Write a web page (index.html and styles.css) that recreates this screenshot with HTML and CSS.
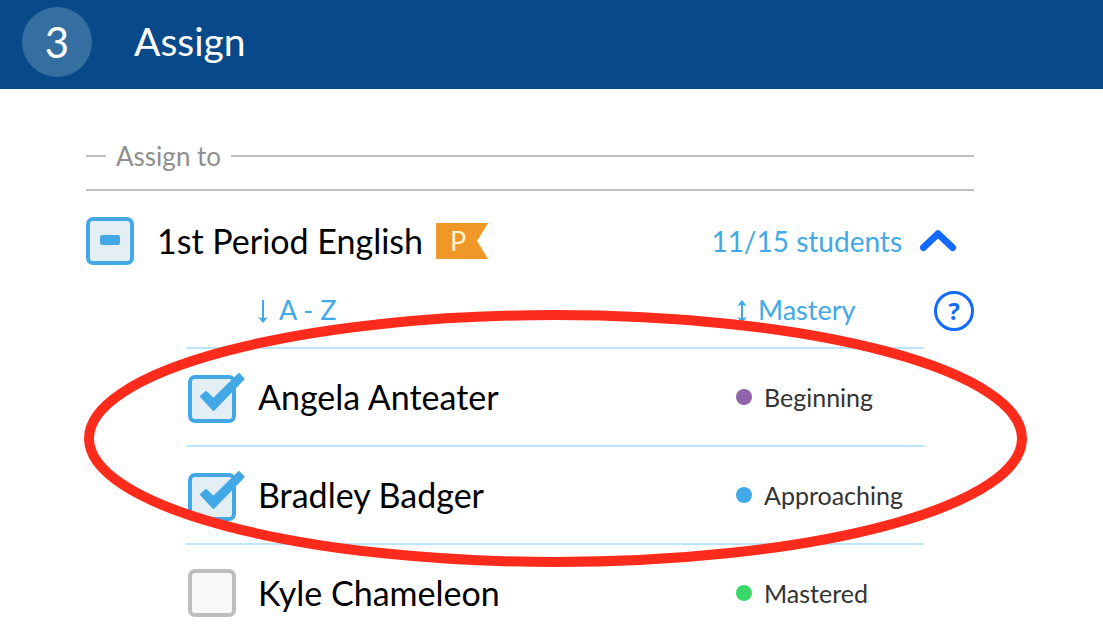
FILE: index.html
```html
<!DOCTYPE html>
<html lang="en">
<head>
<meta charset="utf-8">
<meta name="viewport" content="width=device-width, initial-scale=1">
<title>Assign</title>
<link rel="stylesheet" href="styles.css">
</head>
<body>
<header class="step-header">
  <span class="step-number">3</span>
  <h1 class="step-title">Assign</h1>
</header>
<main class="content">
  <h2 class="section-label">Assign to</h2>
  <section class="class-group">
    <div class="class-row">
      <span class="check">
        <input class="check-input" type="checkbox" id="class-all" checked>
        <svg class="check-art" viewBox="0 0 60 48" aria-hidden="true"><rect class="box-on" x="2" y="2" width="44" height="44" rx="5"/><rect class="mark" x="14" y="18" width="20" height="10" rx="2"/></svg>
      </span>
      <label class="class-name" for="class-all">1st Period English</label>
      <span class="flag"><span class="flag-text">P</span></span>
      <span class="student-count">11/15 students</span>
      <button class="toggle" type="button" aria-label="Collapse class">
        <svg class="toggle-icon" viewBox="0 0 38 24" aria-hidden="true"><path d="M4.500 18.500 19 4.800 33.500 18.500" fill="none" stroke="#146aff" stroke-width="7" stroke-linecap="round" stroke-linejoin="round"/></svg>
      </button>
    </div>
    <div class="roster">
      <table class="students">
        <thead>
          <tr>
            <th class="name-head" colspan="2"><button class="sort" type="button"><svg class="sort-icon" viewBox="0 0 12 24" aria-hidden="true"><path class="stem" d="M6 1V21"/><path class="head" d="M1 18Q6 20 11 18L6 24Z"/></svg>A - Z</button></th>
            <th class="mastery-head"><button class="sort" type="button"><svg class="sort-icon" viewBox="0 0 12 24" aria-hidden="true"><path class="stem" d="M6 4V20"/><path class="head" d="M1 7Q6 5 11 7L6 1ZM1 18Q6 20 11 18L6 24Z"/></svg>Mastery</button></th>
          </tr>
        </thead>
        <tbody>
          <tr>
            <td class="check-cell"><span class="check"><input class="check-input" type="checkbox" id="angela" checked><svg class="check-art" viewBox="0 0 60 48" aria-hidden="true"><rect class="box-on" x="2" y="4" width="44" height="44" rx="5"/><path class="mark tick" d="M13 23.500 18 19 25.500 26 51 1 55.500 6 25.500 37Z"/></svg></span></td>
            <td class="name-cell"><label for="angela">Angela Anteater</label></td>
            <td class="mastery-cell"><span class="mastery beginning">Beginning</span></td>
          </tr>
          <tr>
            <td class="check-cell"><span class="check"><input class="check-input" type="checkbox" id="bradley" checked><svg class="check-art" viewBox="0 0 60 48" aria-hidden="true"><rect class="box-on" x="2" y="4" width="44" height="44" rx="5"/><path class="mark tick" d="M13 23.500 18 19 25.500 26 51 1 55.500 6 25.500 37Z"/></svg></span></td>
            <td class="name-cell"><label for="bradley">Bradley Badger</label></td>
            <td class="mastery-cell"><span class="mastery approaching">Approaching</span></td>
          </tr>
          <tr>
            <td class="check-cell"><span class="check"><input class="check-input" type="checkbox" id="kyle"><svg class="check-art" viewBox="0 0 60 48" aria-hidden="true"><rect class="box-off" x="2" y="2" width="44" height="44" rx="5"/></svg></span></td>
            <td class="name-cell"><label for="kyle">Kyle Chameleon</label></td>
            <td class="mastery-cell"><span class="mastery mastered">Mastered</span></td>
          </tr>
        </tbody>
      </table>
      <button class="help" type="button" aria-label="Help">?</button>
    </div>
    <svg class="highlight" viewBox="0 0 943 257" preserveAspectRatio="none" aria-hidden="true"><ellipse cx="471.500" cy="128.500" rx="466.500" ry="123.500" fill="none" stroke="#fd2b1c" stroke-width="10"/></svg>
  </section>
</main>
</body>
</html>
```

FILE: styles.css
```css
* { box-sizing: border-box; }

body {
  margin: 0;
  background: #fff;
  color: #000;
  font-family: Lato, "Open Sans", sans-serif;
  font-size: 34px;
  line-height: 40px;
}

button {
  padding: 0;
  border: 0;
  background: none;
  font: inherit;
  cursor: pointer;
}

.step-header {
  display: flex;
  align-items: center;
  gap: 42px;
  padding: 7px 22px 12px;
  background: #074989;
  color: #fff;
}

.step-number {
  width: 70px;
  border-radius: 50%;
  background: #356fa2;
  font-size: 42px;
  line-height: 70px;
  text-align: center;
}

.step-title {
  margin: 0;
  padding-bottom: 2px;
  font-size: 39px;
  font-weight: 400;
}

.content { padding: 51px 129px 0 86px; }

.section-label {
  display: flex;
  align-items: center;
  gap: 10px;
  margin: 0 0 17px;
  color: #8e8e8e;
  font-size: 26px;
  font-weight: 400;
  line-height: 32px;
}

.section-label::before,
.section-label::after {
  content: "";
  width: 20px;
  height: 2px;
  background: #bfbfbf;
}

.section-label::after { flex: 1; }

.class-group {
  position: relative;
  border-top: 2px solid #bfbfbf;
}

.class-row {
  display: flex;
  align-items: center;
  padding: 26px 17px 8px 0;
}

.check {
  position: relative;
  display: block;
  flex: none;
  width: 48px;
  height: 48px;
}

.check-input {
  display: block;
  width: 48px;
  height: 48px;
  margin: 0;
  appearance: none;
}

.check-art {
  position: absolute;
  top: 0;
  left: 0;
  width: 60px;
  height: 48px;
  overflow: visible;
  pointer-events: none;
}

.box-on { fill: #e4eef5; stroke: #42a9e6; stroke-width: 4; }
.box-off { fill: #f8f8f8; stroke: #bebebe; stroke-width: 4; }
.mark { fill: #42a9e6; }
.tick { stroke: #42a9e6; stroke-width: 2; stroke-linejoin: round; }

.class-name { margin-left: 23px; }

.flag {
  width: 52px;
  height: 36px;
  margin-left: 13px;
  padding-left: 14px;
  background: #ef9827;
  clip-path: polygon(0 0, 100% 0, 79% 50%, 100% 100%, 0 100%);
  color: #fff3d0;
  font-size: 27px;
  line-height: 36px;
}

.student-count {
  margin-left: auto;
  color: #42a9e6;
  font-size: 28px;
}

.toggle {
  width: 38px;
  height: 24px;
  margin-left: 17px;
}

.toggle-icon {
  display: block;
  width: 38px;
  height: 24px;
}

.roster {
  display: flex;
  gap: 10px;
  padding-left: 100px;
}

.students {
  flex: 1;
  border-collapse: separate;
  border-spacing: 0;
  table-layout: fixed;
}

.students th {
  padding: 17px 0;
  border-bottom: 2px solid #bce5fb;
  color: #42a9e6;
  font-size: 27px;
  font-weight: 400;
  text-align: left;
}

.students .name-head { padding-left: 71px; }
.mastery-head { width: 188px; }

.sort {
  display: flex;
  align-items: center;
  gap: 10px;
  color: inherit;
}

.sort-icon {
  width: 12px;
  height: 24px;
  margin-top: 2px;
}

.stem { fill: none; stroke: #42a9e6; stroke-width: 2; }
.head { fill: #42a9e6; }

.students td {
  padding: 24px 0;
  border-bottom: 2px solid #bce5fb;
}

.students tr:last-child td {
  padding-bottom: 16px;
  border-bottom: 0;
}

.students .check-cell {
  width: 72px;
  padding-left: 2px;
}

.mastery {
  display: flex;
  align-items: center;
  gap: 12px;
  color: #333;
  font-size: 25px;
}

.mastery::before {
  content: "";
  width: 16px;
  height: 16px;
  border-radius: 50%;
}

.beginning::before { background: #8e63a9; }
.approaching::before { background: #42a9e6; }
.mastered::before { background: #3bd867; }

.help {
  flex: none;
  width: 40px;
  height: 40px;
  margin-top: 18px;
  border: 3px solid #146aff;
  border-radius: 50%;
  color: #146aff;
  font-family: "Noto Sans", sans-serif;
  font-size: 24px;
  font-weight: 700;
  line-height: 34px;
}

.highlight {
  position: absolute;
  top: 119px;
  left: -2px;
  width: calc(100% + 55px);
  height: 257px;
  pointer-events: none;
}
```
